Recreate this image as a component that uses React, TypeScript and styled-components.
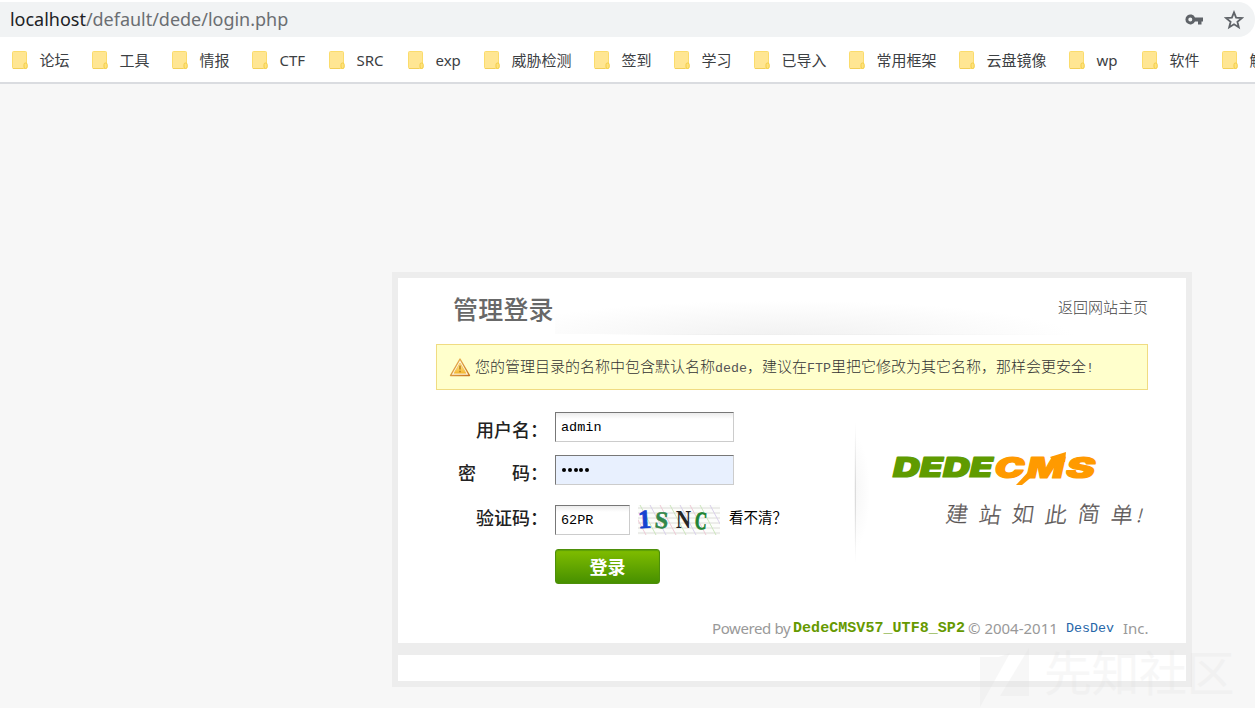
import React from 'react';
import styled, { createGlobalStyle } from 'styled-components';

const GlobalStyle = createGlobalStyle`
  * { box-sizing: border-box; }
  html, body { margin: 0; padding: 0; }
  body {
    background: #f7f7f7;
    font-family: 'Noto Sans', 'Noto Sans CJK SC', sans-serif;
    overflow: hidden;
  }
`;

const Page = styled.div`
  position: relative;
  width: 1255px;
  height: 708px;
  overflow: hidden;
  background: #f7f7f7;
`;

const Toolbar = styled.div`
  background: #fff;
  padding-top: 2px;
`;

const AddressBar = styled.div`
  display: flex;
  align-items: center;
  height: 35px;
  padding: 0 11px 0 10px;
  background: #f1f3f4;
  border-radius: 0 17px 17px 0;
`;

const Url = styled.div`
  flex: 1;
  font-size: 18px;
  line-height: 35px;
  letter-spacing: -0.02px;
  color: #6b6e72;
  white-space: nowrap;
`;

const Host = styled.span`
  color: #202124;
`;

const BarIcons = styled.div`
  display: flex;
  align-items: center;
  gap: 20px;
`;

const BookmarkBar = styled.nav`
  display: flex;
  align-items: center;
  height: 47px;
  padding-left: 12px;
  border-bottom: 2px solid #dadce0;
  overflow: hidden;
`;

const Bookmark = styled.a<{ $width: number }>`
  display: flex;
  flex: none;
  align-items: center;
  gap: 11.5px;
  width: ${(p) => p.$width}px;
  font-size: 15px;
  line-height: 20px;
  color: #3c4043;
  white-space: nowrap;
`;

const Panel = styled.main`
  width: 800px;
  margin: 188px 0 0 392px;
  padding: 6px;
  display: flex;
  flex-direction: column;
  gap: 12px;
  background: #ededed;
`;

const Card = styled.section`
  height: 365px;
  padding: 0 38px;
  background: #fff;
`;

const Strip = styled.div`
  height: 26px;
  background: #fff;
`;

const CardHeader = styled.header`
  display: flex;
  height: 66px;
  padding: 16px 0 7px 17px;
`;

const Title = styled.h1`
  margin: 0;
  width: 102px;
  font-size: 25px;
  font-weight: 500;
  line-height: 30px;
  letter-spacing: 0.2px;
  color: #686868;
  white-space: nowrap;
`;

const Shade = styled.div`
  flex: none;
  width: 541px;
  height: 43px;
  background:
    linear-gradient(90deg, #fff0 8%, #efefef 30%, #f1f1f1 60%, #fff0 96%) 0 40px / 100% 1px no-repeat,
    linear-gradient(#fff0 92%, #fff 92%),
    radial-gradient(ellipse 54% 85% at 42% 100%, #f1f1f1, #fff0);
`;

const HomeLink = styled.a`
  flex: none;
  width: 90px;
  margin-left: -38px;
  font-size: 15px;
  line-height: 27px;
  color: #444;
  font-weight: 300;
`;

const Notice = styled.div`
  display: flex;
  align-items: center;
  gap: 4px;
  height: 46px;
  padding-left: 12px;
  border: 1px solid #f0dc82;
  background: #ffffcc;
  font-size: 15px;
  font-weight: 300;
  color: #333;
  white-space: nowrap;
`;

const NoticeText = styled.span`
  line-height: 20px;
  padding-top: 1px;
`;

const Mono = styled.span`
  font-family: 'Liberation Mono', monospace;
  font-size: 13.33px;
  color: #555;
`;

const Content = styled.div`
  display: flex;
  padding-top: 22px;
`;

const Form = styled.form`
  width: 418px;
  height: 172px;
`;

const Row = styled.div<{ $height: number }>`
  display: flex;
  height: ${(p) => p.$height}px;
`;

const Label = styled.label<{ $top: number }>`
  width: 119px;
  padding: ${(p) => p.$top}px 7px 0 0;
  font-size: 18px;
  font-weight: 500;
  line-height: 24px;
  text-align: right;
  color: #222;
  white-space: nowrap;
`;

const Field = styled.div<{ $width: number; $filled?: boolean }>`
  flex: none;
  width: ${(p) => p.$width}px;
  height: 30px;
  padding-left: 5px;
  border: 1px solid;
  border-color: #777 #ccc #ccc #777;
  background: ${(p) => (p.$filled ? '#e8f0fe' : 'linear-gradient(#ececec, #fff 6px)')};
  font-family: 'Liberation Mono', monospace;
  font-size: 13.5px;
  line-height: 29px;
  color: #000;
`;

const Dots = styled.div`
  display: flex;
  align-items: center;
  gap: 1.8px;
  height: 28px;
  padding-left: 1px;
`;

const Dot = styled.i`
  width: 4px;
  height: 4px;
  border-radius: 50%;
  background: #000;
`;

const Captcha = styled.svg`
  flex: none;
  margin: 0 9px 0 8px;
`;

const Refresh = styled.a`
  font-size: 14.5px;
  line-height: 25px;
  color: #000;
`;

const Submit = styled.button`
  width: 105px;
  height: 35px;
  margin: 0 0 0 119px;
  padding: 1px 0 0;
  border: 1px solid #4d8f0a;
  border-radius: 3px;
  background: linear-gradient(#80bd00, #479000);
  box-shadow: inset 0 1px 1px #5e9f08;
  font-family: 'Noto Sans', 'Noto Sans CJK SC', sans-serif;
  font-size: 18px;
  font-weight: 700;
  line-height: 30px;
  color: #fff;
`;

const Brand = styled.div`
  display: flex;
  width: 294px;
  height: 160px;
`;

const Divider = styled.div`
  flex: none;
  width: 16px;
  height: 140px;
  margin-top: 10px;
  background:
    linear-gradient(#fff0, #dcdcdc 45%, #dcdcdc 60%, #fff0) 1px 0 / 1px 100% no-repeat,
    radial-gradient(ellipse 100% 40% at 0 50%, #f6f6f6, #fff0);
`;

const Footer = styled.footer`
  display: flex;
  justify-content: flex-end;
  margin-top: 32px;
  font-size: 15px;
  line-height: 24px;
  color: #999;
  white-space: pre;
`;

const FooterPart = styled.span<{ $width: number; $spacing?: number }>`
  width: ${(p) => p.$width}px;
  letter-spacing: ${(p) => p.$spacing ?? 0}px;
`;

const Version = styled(FooterPart)`
  padding-top: 1px;
  font-family: 'Liberation Mono', monospace;
  font-weight: 700;
  color: #690;
`;

const Vendor = styled(FooterPart)`
  padding-top: 1px;
  font-family: 'Liberation Mono', monospace;
  font-size: 13.33px;
  color: #2566a8;
`;

const Watermark = styled.div`
  position: absolute;
  left: 980px;
  top: 645px;
  display: flex;
  gap: 14px;
  color: #dedede;
  opacity: 0.22;
  font-size: 48px;
  line-height: 56px;
  letter-spacing: -0.5px;
  white-space: nowrap;
`;

const bookmarks: [string, number][] = [
  ['论坛', 80], ['工具', 80], ['情报', 80], ['CTF', 77], ['SRC', 79], ['exp', 76],
  ['威胁检测', 110], ['签到', 80], ['学习', 80], ['已导入', 95], ['常用框架', 110],
  ['云盘镜像', 110], ['wp', 73], ['软件', 80], ['解密', 80],
];

const FolderIcon = () => (
  <svg width="16" height="20" viewBox="0 0 16 20">
    <rect x="0.5" y="1.5" width="14" height="17" rx="1" fill="#ffe693" stroke="#fbdc6c" />
    <path d="M1 18.5H11" stroke="#f2cf59" />
    <rect x="12" y="13" width="3.2" height="5.5" rx="1.5" fill="#ffe27d" stroke="#f3cd46" />
  </svg>
);

const KeyIcon = () => (
  <svg width="20" height="20" viewBox="0 0 20 20">
    <path
      fill="#5f6368"
      fillRule="evenodd"
      d="M11 7.4A5 5 0 1 0 11 11.4H14V14.4H17.5V11.4H19V7.4ZM6.3 7.4A2 2 0 1 1 6.3 11.4A2 2 0 1 1 6.3 7.4Z"
    />
  </svg>
);

const StarIcon = () => (
  <svg width="20" height="20" viewBox="0 0 20 20">
    <path
      d="M10 2.4L12.1 7.7L17.8 8.1L13.4 11.8L14.8 17.3L10 14.3L5.2 17.3L6.6 11.8L2.2 8.1L7.9 7.7Z"
      fill="none"
      stroke="#5f6368"
      strokeWidth="1.8"
    />
  </svg>
);

const WarningIcon = () => (
  <svg width="22" height="20" viewBox="0 0 22 20">
    <defs>
      <linearGradient id="warn" x2="0" y2="1">
        <stop stopColor="#fff0a8" />
        <stop offset="1" stopColor="#f4b72c" />
      </linearGradient>
      <linearGradient id="rim" x2="1" y2="1">
        <stop stopColor="#efbd5c" />
        <stop offset="1" stopColor="#c6751f" />
      </linearGradient>
    </defs>
    <path d="M11 2L20.5 18.5H1.5Z" fill="#fff4dd" stroke="url(#rim)" strokeWidth="1.4" strokeLinejoin="round" />
    <path d="M11 6L17 16.2H5Z" fill="url(#warn)" stroke="#f1bb42" strokeWidth="0.7" />
    <path d="M11 8.5V12.6M11 13.8V15.3" stroke="#b97b1d" strokeWidth="1.5" />
  </svg>
);

const CaptchaImage = () => (
  <Captcha width="82" height="30" viewBox="0 0 82 30">
    <rect width="82" height="30" fill="#fcfdfb" />
    {[3, 8, 13, 18, 23, 28].map((y) => (
      <path key={y} d={`M0 ${y}H82`} stroke="#dcdcd8" />
    ))}
    {[-8, 2, 12, 22, 32, 42, 52, 62, 72].map((x, i) => (
      <path key={x} d={`M${x} 0L${x + 16} 30`} stroke={['#eec9d6', '#cce6bd', '#d9cfea'][i % 3]} />
    ))}
    <g fontFamily="Liberation Serif, serif" fontWeight="700">
      <text x="0" y="23" fontSize="26" fill="#1643d0" stroke="#1643d0" strokeWidth="0.8" transform="rotate(-3 6 15)">1</text>
      <text x="17" y="23" fontSize="24" fill="#32874a" stroke="#32874a" strokeWidth="0.6" transform="rotate(5 23 15)">S</text>
      <text x="38" y="23" fontSize="26" textLength="15" lengthAdjust="spacingAndGlyphs" fill="#252525">N</text>
      <text x="57" y="24" fontSize="25" textLength="12" lengthAdjust="spacingAndGlyphs" fill="#218434" stroke="#218434" strokeWidth="0.8" transform="rotate(5 62 15)">C</text>
    </g>
  </Captcha>
);

const BrandMark = () => (
  <svg width="278" height="160" viewBox="0 0 278 160">
    <g fontFamily="Inter, sans-serif" fontWeight="900" fontStyle="italic" fontSize="27.5" strokeWidth="1.2" strokeLinejoin="round">
      <text x="23" y="64.5" textLength="100" lengthAdjust="spacingAndGlyphs" fill="#5f9b00" stroke="#5f9b00">DEDE</text>
      <g fill="#ff9a00" stroke="#ff9a00" fontSize="29">
        <text x="124.5" y="65.5" textLength="30" lengthAdjust="spacingAndGlyphs">C</text>
        <text x="157" y="65.5" textLength="37" lengthAdjust="spacingAndGlyphs">M</text>
        <text x="196" y="65.5" textLength="29" lengthAdjust="spacingAndGlyphs">S</text>
      </g>
    </g>
    <path d="M160 58L165 62L152 73H146Z" fill="#ff9a00" />
    <path d="M180 45L196 40L195 50H184Z" fill="#ff9a00" />
    <g fontFamily="'Noto Sans CJK SC', sans-serif" fontWeight="300" fontSize="22" fill="#5a5555" stroke="#5a5555" strokeWidth="0.3">
      {['建', '站', '如', '此', '简', '单'].map((c, i) => (
        <text key={c} transform={`translate(${75 + i * 33} ${110 + (i % 2)}) skewX(-8)`}>{c}</text>
      ))}
      <text transform="translate(266 110) skewX(-15)" fontSize="18">!</text>
    </g>
  </svg>
);

export default function App() {
  return (
    <Page>
      <GlobalStyle />
      <Toolbar>
        <AddressBar>
          <Url><Host>localhost</Host>/default/dede/login.php</Url>
          <BarIcons><KeyIcon /><StarIcon /></BarIcons>
        </AddressBar>
        <BookmarkBar>
          {bookmarks.map(([name, width]) => (
            <Bookmark key={name} $width={width}><FolderIcon />{name}</Bookmark>
          ))}
        </BookmarkBar>
      </Toolbar>
      <Panel>
        <Card>
          <CardHeader>
            <Title>管理登录</Title>
            <Shade />
            <HomeLink>返回网站主页</HomeLink>
          </CardHeader>
          <Notice>
            <WarningIcon />
            <NoticeText>
              您的管理目录的名称中包含默认名称<Mono>dede</Mono>，建议在<Mono>FTP</Mono>里把它修改为其它名称，那样会更安全<Mono>!</Mono>
            </NoticeText>
          </Notice>
          <Content>
            <Form>
              <Row $height={43}>
                <Label $top={6}>用户名：</Label>
                <Field $width={179}>admin</Field>
              </Row>
              <Row $height={50}>
                <Label $top={6}>密　　码：</Label>
                <Field $width={179} $filled>
                  <Dots><Dot /><Dot /><Dot /><Dot /><Dot /></Dots>
                </Field>
              </Row>
              <Row $height={44}>
                <Label $top={1}>验证码：</Label>
                <Field $width={75}>62PR</Field>
                <CaptchaImage />
                <Refresh>看不清？</Refresh>
              </Row>
              <Submit type="button">登录</Submit>
            </Form>
            <Brand>
              <Divider />
              <BrandMark />
            </Brand>
          </Content>
          <Footer>
            <FooterPart $width={81} $spacing={-0.4}>Powered by</FooterPart>
            <Version $width={175} $spacing={0.05}>DedeCMSV57_UTF8_SP2</Version>
            <FooterPart $width={98}>© 2004-2011</FooterPart>
            <Vendor $width={57}>DesDev</Vendor>
            <FooterPart $width={25}>Inc.</FooterPart>
          </Footer>
        </Card>
        <Strip />
      </Panel>
      <Watermark>
        <svg width="50" height="62" viewBox="0 0 50 62" fill="currentColor">
          <path d="M0 12H19L30 8L0 62ZM49 3V51H20Z" />
        </svg>
        先知社区
      </Watermark>
    </Page>
  );
}
